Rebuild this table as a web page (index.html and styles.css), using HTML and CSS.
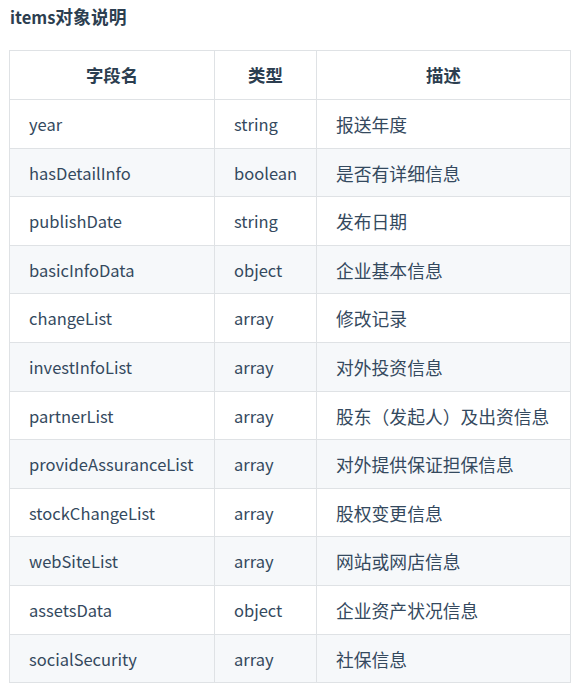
FILE: index.html
```html
<!DOCTYPE html>
<html lang="zh-CN">
<head>
<meta charset="utf-8">
<title>items对象说明</title>
<link rel="stylesheet" href="styles.css">
</head>
<body>
<h4 class="title">items<span class="zh">对象说明</span></h4>
<table class="doc-table">
  <colgroup>
    <col class="c1"><col class="c2"><col class="c3">
  </colgroup>
  <thead>
    <tr><th class="zh">字段名</th><th class="zh">类型</th><th class="zh">描述</th></tr>
  </thead>
  <tbody>
    <tr><td>year</td><td>string</td><td class="zh">报送年度</td></tr>
    <tr><td>hasDetailInfo</td><td>boolean</td><td class="zh">是否有详细信息</td></tr>
    <tr><td>publishDate</td><td>string</td><td class="zh">发布日期</td></tr>
    <tr><td>basicInfoData</td><td>object</td><td class="zh">企业基本信息</td></tr>
    <tr><td>changeList</td><td>array</td><td class="zh">修改记录</td></tr>
    <tr><td>investInfoList</td><td>array</td><td class="zh">对外投资信息</td></tr>
    <tr><td>partnerList</td><td>array</td><td class="zh">股东（发起人）及出资信息</td></tr>
    <tr><td>provideAssuranceList</td><td>array</td><td class="zh">对外提供保证担保信息</td></tr>
    <tr><td>stockChangeList</td><td>array</td><td class="zh">股权变更信息</td></tr>
    <tr><td>webSiteList</td><td>array</td><td class="zh">网站或网店信息</td></tr>
    <tr><td>assetsData</td><td>object</td><td class="zh">企业资产状况信息</td></tr>
    <tr><td>socialSecurity</td><td>array</td><td class="zh">社保信息</td></tr>
  </tbody>
</table>
</body>
</html>
```
FILE: styles.css
```css
html, body {
  margin: 0;
  padding: 0;
  background: #fff;
}
body {
  padding: 0 9px;
  font-family: "Noto Sans CJK SC", "Noto Sans", sans-serif;
  font-size: 16.5px;
  color: #2c3e50;
}
.zh {
  font-size: 17.8px;
}
.title {
  margin: 0;
  padding-top: 4px;
  height: 46px;
  line-height: 24px;
  font-size: 16.5px;
  font-weight: 700;
  padding-left: 1px;
}
.title .zh {
  font-size: 17.8px;
}
.doc-table {
  border-collapse: collapse;
  width: 561px;
  table-layout: fixed;
}
.c1 { width: 205px; }
.c2 { width: 102px; }
.c3 { width: 254px; }
.doc-table th,
.doc-table td {
  border: 1px solid #dfe2e5;
  padding: 12px 19px 11.6px;
  line-height: 24px;
  text-align: left;
  white-space: nowrap;
  color: #34495e;
}
.doc-table th {
  text-align: center;
  font-weight: 700;
  color: #2c3e50;
  font-size: 17.4px;
  padding-top: 12.4px;
}
.doc-table tbody tr:nth-child(even) {
  background: #f6f8fa;
}
```
